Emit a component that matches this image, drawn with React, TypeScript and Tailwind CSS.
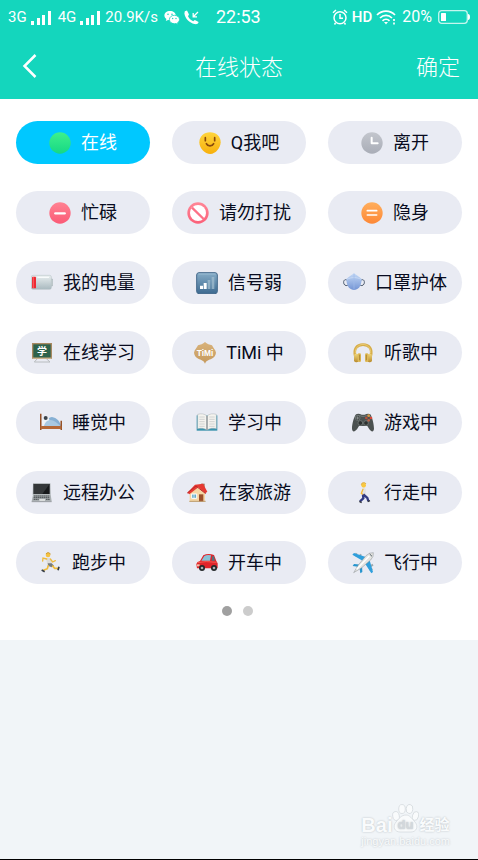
import React, { useState } from 'react';

// All status icons share one 66 x 66 grid and are shown at 22px
const Icon = ({ children }: { children: React.ReactNode }) => (
    <svg viewBox="0 0 66 66" className="size-[22px] shrink-0" fill="none" aria-hidden="true">
        {children}
    </svg>
);

const Gradient = ({ id, from, to }: { id: string, from: string, to: string }) => (
    <defs>
        <linearGradient id={id} x1="0" y1="0" x2="0" y2="1">
            <stop offset="0" stopColor={from} />
            <stop offset="1" stopColor={to} />
        </linearGradient>
    </defs>
);

const OnlineIcon = () => (
    <Icon>
        <Gradient id="online" from="#3ef08c" to="#16d884" />
        <circle cx="33" cy="33" r="32" fill="url(#online)" />
    </Icon>
);

const SmileIcon = () => (
    <Icon>
        <Gradient id="smile" from="#ffd43c" to="#f7b00c" />
        <path d="M33 1C51 1 65 13 65 31C65 47 50 66 34 66C17 66 1 49 1 31C1 13 15 1 33 1Z" fill="url(#smile)" />
        <path d="M19 17v9M47 17v9M22 35c4 9 18 9 22 0" stroke="#8a4b0c" strokeWidth="5" strokeLinecap="round" />
    </Icon>
);

const AwayIcon = () => (
    <Icon>
        <Gradient id="away" from="#c3c6cd" to="#a9adb7" />
        <circle cx="33" cy="33" r="32" fill="url(#away)" />
        <path d="M32 17v17h18" stroke="#fff" strokeWidth="6" strokeLinecap="round" strokeLinejoin="round" />
    </Icon>
);

const BusyIcon = () => (
    <Icon>
        <Gradient id="busy" from="#ff8292" to="#fb5a76" />
        <circle cx="33" cy="33" r="32" fill="url(#busy)" />
        <path d="M19 34h28" stroke="#fff" strokeWidth="7" strokeLinecap="round" />
    </Icon>
);

const NoDisturbIcon = () => (
    <Icon>
        <Gradient id="disturb" from="#ff8797" to="#fb6079" />
        <circle cx="33" cy="33" r="32" fill="url(#disturb)" />
        <circle cx="33" cy="33" r="24" fill="#fff" />
        <path d="M15 17l35 34" stroke="#fc7187" strokeWidth="7" />
    </Icon>
);

const InvisibleIcon = () => (
    <Icon>
        <Gradient id="invisible" from="#ffae5c" to="#fd8836" />
        <circle cx="33" cy="33" r="32" fill="url(#invisible)" />
        <path d="M19 26h28M19 39h28" stroke="#fff" strokeWidth="5" strokeLinecap="round" />
    </Icon>
);

const BatteryIcon = () => (
    <Icon>
        <Gradient id="battery" from="#e9eff0" to="#a9b9bf" />
        <path d="M57 21h6q3 0 3 4v13q0 4-3 4h-6z" fill="#c7d0d3" stroke="#9ba8ad" strokeWidth="1.5" />
        <rect x="1" y="10" width="60" height="42" rx="5" fill="url(#battery)" stroke="#b0bcc0" strokeWidth="1.5" />
        <rect x="3" y="14" width="12" height="35" rx="2" fill="#ed2933" />
        <path d="M7 15v33" stroke="#ff7d7a" strokeWidth="2" />
        <path d="M19 16h35" stroke="#f8fbfb" strokeWidth="4" />
    </Icon>
);

const SignalIcon = () => (
    <Icon>
        <Gradient id="signal" from="#86acc7" to="#3d6a90" />
        <rect x="2" y="2" width="62" height="63" rx="7" fill="url(#signal)" stroke="#44698b" strokeWidth="3" />
        <path d="M7 6h52" stroke="#a8c5da" strokeWidth="2" />
        <path d="M12 41h9v10h-9zM23 33h9v18h-9z" fill="#fff" />
        <path d="M35 24h8v27h-8zM47 15h8v36h-8z" fill="#a2bdcf" opacity=".75" />
    </Icon>
);

const MaskIcon = () => (
    <Icon>
        <Gradient id="mask" from="#c4d9f6" to="#7394d4" />
        <path d="M12 24C3 20 0 29 3 36C6 42 12 42 17 38M54 24c9-4 12 5 9 12c-3 6-9 6-14 2" stroke="#4f5d70" strokeWidth="3" />
        <path d="M33 4C40 9 47 14 56 21C56 31 53 41 49 46C39 57 27 57 17 46C13 41 10 31 10 21C19 14 26 9 33 4Z" fill="url(#mask)" />
        <path d="M12 22C24 15 42 15 54 22" stroke="#dce9fa" strokeWidth="1.5" />
        <path d="M33 5v48" stroke="#a1bbea" strokeWidth="2" />
    </Icon>
);

const BlackboardIcon = () => (
    <Icon>
        <path d="M20 49L10 60h47L45 49" stroke="#b8bcbf" strokeWidth="3" />
        <rect x="3" y="3" width="60" height="48" fill="#a88961" />
        <rect x="7" y="7" width="52" height="40" fill="#2d624b" />
        <path d="M4 49h58" stroke="#cab28d" strokeWidth="4" />
        <text x="33" y="38" fontSize="30" fontWeight="700" textAnchor="middle" fill="#fff" fontFamily="'Noto Sans CJK SC', sans-serif">学</text>
    </Icon>
);

const TimiIcon = () => (
    <Icon>
        <Gradient id="timi" from="#d8b27a" to="#c69a5e" />
        <path d="M33 0C39 7 47 7 54 10C56 16 65 24 66 32C65 40 60 47 53 50C45 54 37 54 33 65C29 54 21 54 13 50C6 47 1 40 0 32C1 24 10 16 12 10C19 7 27 7 33 0Z" fill="url(#timi)" />
        <text x="33" y="41" fontSize="25" fontWeight="700" textAnchor="middle" fill="#fff" fontFamily="'Liberation Sans', sans-serif">TiMi</text>
    </Icon>
);

const HeadphonesIcon = () => (
    <Icon>
        <Gradient id="phones" from="#efd77e" to="#b88a2c" />
        <path d="M10 43C4 21 14 8 33 8C52 8 62 21 56 43" stroke="#d6ac48" strokeWidth="8" />
        <path d="M10 34C9 19 18 8 33 7C48 8 57 19 56 34" stroke="#f2d987" strokeWidth="2" />
        <rect x="6" y="35" width="14" height="26" rx="6" fill="url(#phones)" />
        <rect x="17" y="34" width="10" height="26" rx="4" fill="#dfba57" />
        <rect x="46" y="35" width="14" height="26" rx="6" fill="url(#phones)" />
        <rect x="39" y="34" width="10" height="26" rx="4" fill="#dfba57" />
        <path d="M23 38v17M43 38v17" stroke="#8f6a24" strokeWidth="2" />
    </Icon>
);

const BedIcon = () => (
    <Icon>
        <path d="M12 42C15 27 26 16 36 15C50 17 60 28 63 42Z" fill="#86b0d4" />
        <path d="M6 32C6 20 12 12 21 14C28 17 30 26 28 34L12 42Z" fill="#eef3f7" />
        <path d="M12 42C14 32 21 25 31 24C42 25 50 32 62 42Z" fill="#a9c9e2" />
        <circle cx="17" cy="18" r="6" fill="#3b4249" />
        <path d="M2 5v49M64 26v28" stroke="#965126" strokeWidth="5" />
        <path d="M2 42h62v9H2z" fill="#b56938" />
    </Icon>
);

const BookIcon = () => (
    <Icon>
        <path d="M2 10h62v46H2z" fill="#3792ac" />
        <path d="M5 7C15 4 26 5 33 12C40 5 51 4 61 7V50C50 47 40 49 33 54C26 49 16 47 5 50Z" fill="#f4f3ef" stroke="#a9b1b4" strokeWidth="1.5" />
        <path d="M33 12v41" stroke="#828a8f" strokeWidth="4" />
        <path d="M10 15h16M10 22h16M10 29h16M10 36h16M10 43h16M40 15h16M40 22h16M40 29h16M40 36h16M40 43h16" stroke="#bfc1c3" strokeWidth="2" />
    </Icon>
);

const GamepadIcon = () => (
    <Icon>
        <path d="M12 7C18 3 24 6 29 8H38C43 6 49 3 55 7C61 16 66 37 66 50C65 61 58 60 52 52L46 42H21L15 52C8 60 1 61 0 50C0 37 5 16 12 7Z" fill="#4b5150" />
        <path d="M8 17C14 10 23 10 30 13H37C44 10 53 10 59 17" stroke="#737b79" strokeWidth="3" />
        <circle cx="17" cy="18" r="7" fill="#272b2b" stroke="#858c89" strokeWidth="2" />
        <path d="M17 13v10M12 18h10" stroke="#8d9391" strokeWidth="3" />
        <circle cx="25" cy="33" r="7" fill="#2c302f" stroke="#7d8582" strokeWidth="2" />
        <circle cx="42" cy="33" r="7" fill="#2c302f" stroke="#7d8582" strokeWidth="2" />
        <circle cx="50" cy="11" r="4" fill="#d89841" />
        <circle cx="57" cy="18" r="4" fill="#d94738" />
        <circle cx="50" cy="25" r="4" fill="#ba6249" />
        <circle cx="43" cy="18" r="4" fill="#b94e39" />
    </Icon>
);

const LaptopIcon = () => (
    <Icon>
        <path d="M6 4h52l1 34H5z" fill="#a5abad" />
        <path d="M8 6h48v30H8z" fill="#17191b" />
        <path d="M8 6h48L34 36H8z" fill="#343739" />
        <path d="M6 38h53l3 20H2z" fill="#a9afb1" />
        <path d="M9 42h46M8 47h48M8 52h15M45 52h12" stroke="#4a4f52" strokeWidth="3" strokeDasharray="5 1" />
        <path d="M25 51h17v6H25z" fill="#dadddd" />
        <path d="M2 59h60" stroke="#74797c" strokeWidth="2" />
    </Icon>
);

const HouseIcon = () => (
    <Icon>
        <path d="M42 5h11v22H42z" fill="#a87156" />
        <path d="M8 29L29 11L54 31V59H8z" fill="#f5d6a4" />
        <path d="M1 32L24 8L48 5L61 29L55 34L34 16L7 37z" fill="#e63932" />
        <path d="M1 33L27 12L56 35" stroke="#b9292a" strokeWidth="3" />
        <path d="M36 37h13v22H36z" fill="#9c502b" />
        <path d="M14 36h15v13H14z" fill="#65abc8" stroke="#fff" strokeWidth="3" />
        <path d="M21 36v13" stroke="#fff" strokeWidth="2" />
        <path d="M7 58h49" stroke="#ba9c70" strokeWidth="3" />
    </Icon>
);

const WalkIcon = () => (
    <Icon>
        <circle cx="35" cy="10" r="7" fill="#fac83e" />
        <path d="M28 8C29 0 40 1 42 6" stroke="#dda320" strokeWidth="3" />
        <path d="M31 18C37 16 43 20 42 28L40 39H28Z" fill="#e2e2e3" />
        <path d="M33 22L28 34L36 40" stroke="#f4ba38" strokeWidth="4" strokeLinecap="round" />
        <path d="M34 37L46 48L49 57M33 38L34 49L24 58" stroke="#323b84" strokeWidth="7" />
        <path d="M22 58l7 4M47 59l7-3" stroke="#30343e" strokeWidth="4" />
    </Icon>
);

const RunIcon = () => (
    <Icon>
        <circle cx="24" cy="9" r="7" fill="#f5c242" />
        <path d="M18 6C22 0 29 1 31 7" stroke="#c99222" strokeWidth="3" />
        <path d="M18 19C26 15 34 20 36 29L34 39L22 38Z" fill="#dddcda" />
        <path d="M20 21L9 18L8 27M31 21L38 30L46 26" stroke="#efbb3d" strokeWidth="4" strokeLinecap="round" />
        <path d="M23 34h12l7 7-7 5-10-4z" fill="#777b7b" />
        <path d="M37 41L44 49L56 49M25 40L22 50L10 55" stroke="#f0bc3c" strokeWidth="5" />
        <path d="M57 44l-3 11M5 54l9 5" stroke="#343b43" strokeWidth="5" />
    </Icon>
);

const CarIcon = () => (
    <Icon>
        <path d="M1 36Q3 29 12 27L22 10Q36 3 54 9L61 27L65 34V49H3Z" fill="#e0242a" />
        <path d="M25 12Q32 8 45 10L42 26H16Z" fill="#8ac2d5" />
        <path d="M49 11Q53 11 54 14L57 26H47Z" fill="#54727d" />
        <path d="M4 32Q28 26 62 31" stroke="#f45a4f" strokeWidth="3" />
        <path d="M3 37h8v6H3z" fill="#f1c4aa" />
        <circle cx="18" cy="48" r="9" fill="#25282a" />
        <circle cx="54" cy="48" r="9" fill="#25282a" />
        <circle cx="18" cy="48" r="4" fill="#a9b0b3" />
        <circle cx="54" cy="48" r="4" fill="#a9b0b3" />
    </Icon>
);

const PlaneIcon = () => (
    <Icon>
        <path d="M14 4l-5 8M27 7l-5 8M63 38l-8 5M61 50l-8 5" stroke="#9da8ae" strokeWidth="6" />
        <path d="M38 30L1 8L6 3L48 17ZM36 30L58 64L63 60L51 18Z" fill="#2f9fdc" />
        <path d="M24 45L2 42L6 36L30 38ZM22 44L25 64L31 60L30 38Z" fill="#2795ce" />
        <path d="M5 62L19 39L42 11Q52 1 64 2Q66 13 56 24L28 48Z" fill="#e5e5e2" stroke="#898f92" strokeWidth="1.5" />
        <path d="M14 52L52 12" stroke="#fff" strokeWidth="4" />
        <path d="M53 6l7 7" stroke="#4c5b64" strokeWidth="3" />
    </Icon>
);

const STATUSES = [
    { label: '在线', icon: OnlineIcon },
    { label: 'Q我吧', icon: SmileIcon },
    { label: '离开', icon: AwayIcon },
    { label: '忙碌', icon: BusyIcon },
    { label: '请勿打扰', icon: NoDisturbIcon },
    { label: '隐身', icon: InvisibleIcon },
    { label: '我的电量', icon: BatteryIcon },
    { label: '信号弱', icon: SignalIcon },
    { label: '口罩护体', icon: MaskIcon },
    { label: '在线学习', icon: BlackboardIcon },
    { label: 'TiMi 中', icon: TimiIcon },
    { label: '听歌中', icon: HeadphonesIcon },
    { label: '睡觉中', icon: BedIcon },
    { label: '学习中', icon: BookIcon },
    { label: '游戏中', icon: GamepadIcon },
    { label: '远程办公', icon: LaptopIcon },
    { label: '在家旅游', icon: HouseIcon },
    { label: '行走中', icon: WalkIcon },
    { label: '跑步中', icon: RunIcon },
    { label: '开车中', icon: CarIcon },
    { label: '飞行中', icon: PlaneIcon },
];

const SignalBars = () => (
    <svg viewBox="0 0 21 15" className="h-[15px] w-[21px]" fill="#fff" aria-hidden="true">
        <path d="M0 11h3v4H0zM6 8h3v7H6zM11 5h3v10h-3zM17 1h3v14h-3z" />
    </svg>
);

const StatusBar = () => (
    <div className="flex h-[34px] items-center justify-between px-2 font-['Roboto',sans-serif] text-base">
        <div className="flex items-center gap-1">
            <span className="text-[15px]">3G</span>
            <SignalBars />
            <span className="ml-0.5 text-[15px]">4G</span>
            <SignalBars />
            <span className="text-[15px]">20.9K/s</span>
            <svg viewBox="0 0 16 15" className="ml-0.5 h-[15px] w-4" aria-hidden="true">
                <path d="M6 1C2.7 1 .4 3 .4 5.6c0 1.5.8 2.7 2 3.5L1.8 11l2.3-1.1 1.9.3c3.2 0 5.8-2 5.8-4.6S9.3 1 6 1z" fill="#fff" />
                <path d="M10.4 5.3c-2.9 0-5 1.8-5 4.2s2.2 4.2 5 4.2l1.6-.2 2 1-.5-1.7c1.2-.8 2-1.9 2-3.3 0-2.4-2.3-4.2-5.1-4.2z" fill="#fff" stroke="#14d6bd" strokeWidth=".8" />
                <g fill="#14d6bd">
                    <circle cx="4" cy="4.2" r=".8" />
                    <circle cx="8" cy="4.2" r=".8" />
                    <circle cx="8.7" cy="8.5" r=".7" />
                    <circle cx="12" cy="8.5" r=".7" />
                </g>
            </svg>
            <svg viewBox="0 0 16 15" className="h-[15px] w-4" aria-hidden="true">
                <path d="M.8 1.2L3 .6 5 4.4 4 6.2C5 8.4 6.8 10.2 9.2 11.2L10.8 10 14.6 12C14.2 13.9 12.4 14.6 10.5 14.1C5.5 12.9 1 8.4.4 3.5Z" fill="#fff" />
                <path d="M14 2L9.5 6.5M9.2 3v3.8h3.8" stroke="#fff" strokeWidth="1.3" fill="none" />
            </svg>
            <span className="ml-3 text-lg">22:53</span>
        </div>
        <div className="flex items-center gap-1">
            <svg viewBox="0 0 16 16" className="size-4" fill="none" stroke="#fff" strokeWidth="1.5" aria-hidden="true">
                <circle cx="8" cy="8.8" r="6" />
                <path d="M8 5v4.3h3M1 3.7L4 1M12 1l3 2.7M3.5 14l-1 1.5M12.5 14l1 1.5" />
            </svg>
            <span className="text-[15px] font-medium">HD</span>
            <svg viewBox="0 0 20 15" className="h-[15px] w-5" fill="none" stroke="#fff" strokeWidth="1.7" aria-hidden="true">
                <path d="M1 5C6-.2 14-.2 19 5M4 8c3.5-3.5 8.5-3.5 12 0M6.5 10.8c2-2 5-2 7 0" />
                <path d="M8 12h4l-2 2.5z" fill="#fff" stroke="none" />
                <path d="M18 9v2M18 12.5v2" />
            </svg>
            <span className="ml-0.5 text-base">20%</span>
            <svg viewBox="0 0 32 14" className="ml-0.5 h-[14px] w-8" aria-hidden="true">
                <rect x=".7" y=".7" width="28.6" height="12.6" rx="3" fill="none" stroke="#c5f6ee" strokeWidth="1.3" />
                <rect x="3" y="3" width="5" height="8" rx=".5" fill="#fff" />
                <path d="M30 4q2 0 2 3t-2 3z" fill="#fff" />
            </svg>
        </div>
    </div>
);

const Watermark = () => (
    <div className="mr-7 mb-2.5 flex flex-col font-['Liberation_Sans','Noto_Sans_CJK_SC',sans-serif] whitespace-nowrap text-[#f9fbfc] [text-shadow:0_0_2px_#b4babf]">
        <div className="flex items-end">
            <span className="text-xl leading-4 font-bold">Bai</span>
            <svg viewBox="0 0 27 29" className="h-[29px] w-[27px]" fill="#f9fbfc" stroke="#d5dade" strokeWidth=".8" aria-hidden="true">
                <ellipse cx="4" cy="12" rx="3.3" ry="4.5" transform="rotate(-12 4 12)" />
                <ellipse cx="10" cy="5" rx="3.3" ry="4.5" />
                <ellipse cx="17.5" cy="5" rx="3.3" ry="4.5" transform="rotate(8 17.5 5)" />
                <ellipse cx="23.5" cy="12" rx="3" ry="4.5" transform="rotate(15 23.5 12)" />
                <path d="M14 11C18 11 20 15 23 18C27 23 24 28 19 28H8C3 28 0 23 4 18C7 15 9 11 14 11Z" />
                <text x="13.5" y="25" fontSize="13" fontWeight="700" textAnchor="middle" fill="#d3d8dc" stroke="none">du</text>
            </svg>
            <span className="text-[15px] leading-4 font-bold">经验</span>
        </div>
        <span className="text-[11px] leading-4">jingyan.baidu.com</span>
    </div>
);

export default function App() {
    const [selected, setSelected] = useState('在线');
    const [page, setPage] = useState(0);

    return (
        <div className="flex min-h-screen flex-col border-b border-black bg-[#f1f5f8] font-['Roboto','Noto_Sans_CJK_SC',sans-serif]">
            <header className="bg-[#14d6bd] text-white">
                <StatusBar />
                <div className="grid h-[65px] grid-cols-3 items-center px-[18px] pb-1 font-['Noto_Sans_CJK_SC',sans-serif] text-[22px] leading-8 font-light">
                    <button type="button" aria-label="返回" className="flex size-8 items-center">
                        <svg viewBox="0 0 20 28" className="h-7 w-5" fill="none" stroke="#fff" strokeWidth="2.5" aria-hidden="true">
                            <path d="M17.500 4L6.500 15l11 11" />
                        </svg>
                    </button>
                    <h1 className="text-center">在线状态</h1>
                    <button type="button" className="justify-self-end">确定</button>
                </div>
            </header>

            <main className="bg-white px-4 pt-[22px] pb-6">
                <div className="grid grid-cols-3 gap-x-[22px] gap-y-[27px]">
                    {STATUSES.map(({ label, icon: StatusIcon }) => (
                        <button
                            key={label}
                            type="button"
                            aria-pressed={selected === label}
                            onClick={() => setSelected(label)}
                            className={`flex h-[43px] items-center justify-center gap-2.5 rounded-full text-lg whitespace-nowrap ${selected === label ? 'bg-[#00c8ff] text-white' : 'bg-[#e9ebf3] text-[#080b20]'}`}
                        >
                            <StatusIcon />
                            <span>{label}</span>
                        </button>
                    ))}
                </div>
                <div className="mt-[22px] flex justify-center gap-[11px] pr-1">
                    {[0, 1].map((i) => (
                        <button
                            key={i}
                            type="button"
                            aria-label={`第${i + 1}页`}
                            onClick={() => setPage(i)}
                            className={`size-2.5 rounded-full ${page === i ? 'bg-[#a0a0a0]' : 'bg-[#cccccc]'}`}
                        />
                    ))}
                </div>
            </main>

            <footer className="mt-auto flex justify-end">
                <Watermark />
            </footer>
        </div>
    );
}
